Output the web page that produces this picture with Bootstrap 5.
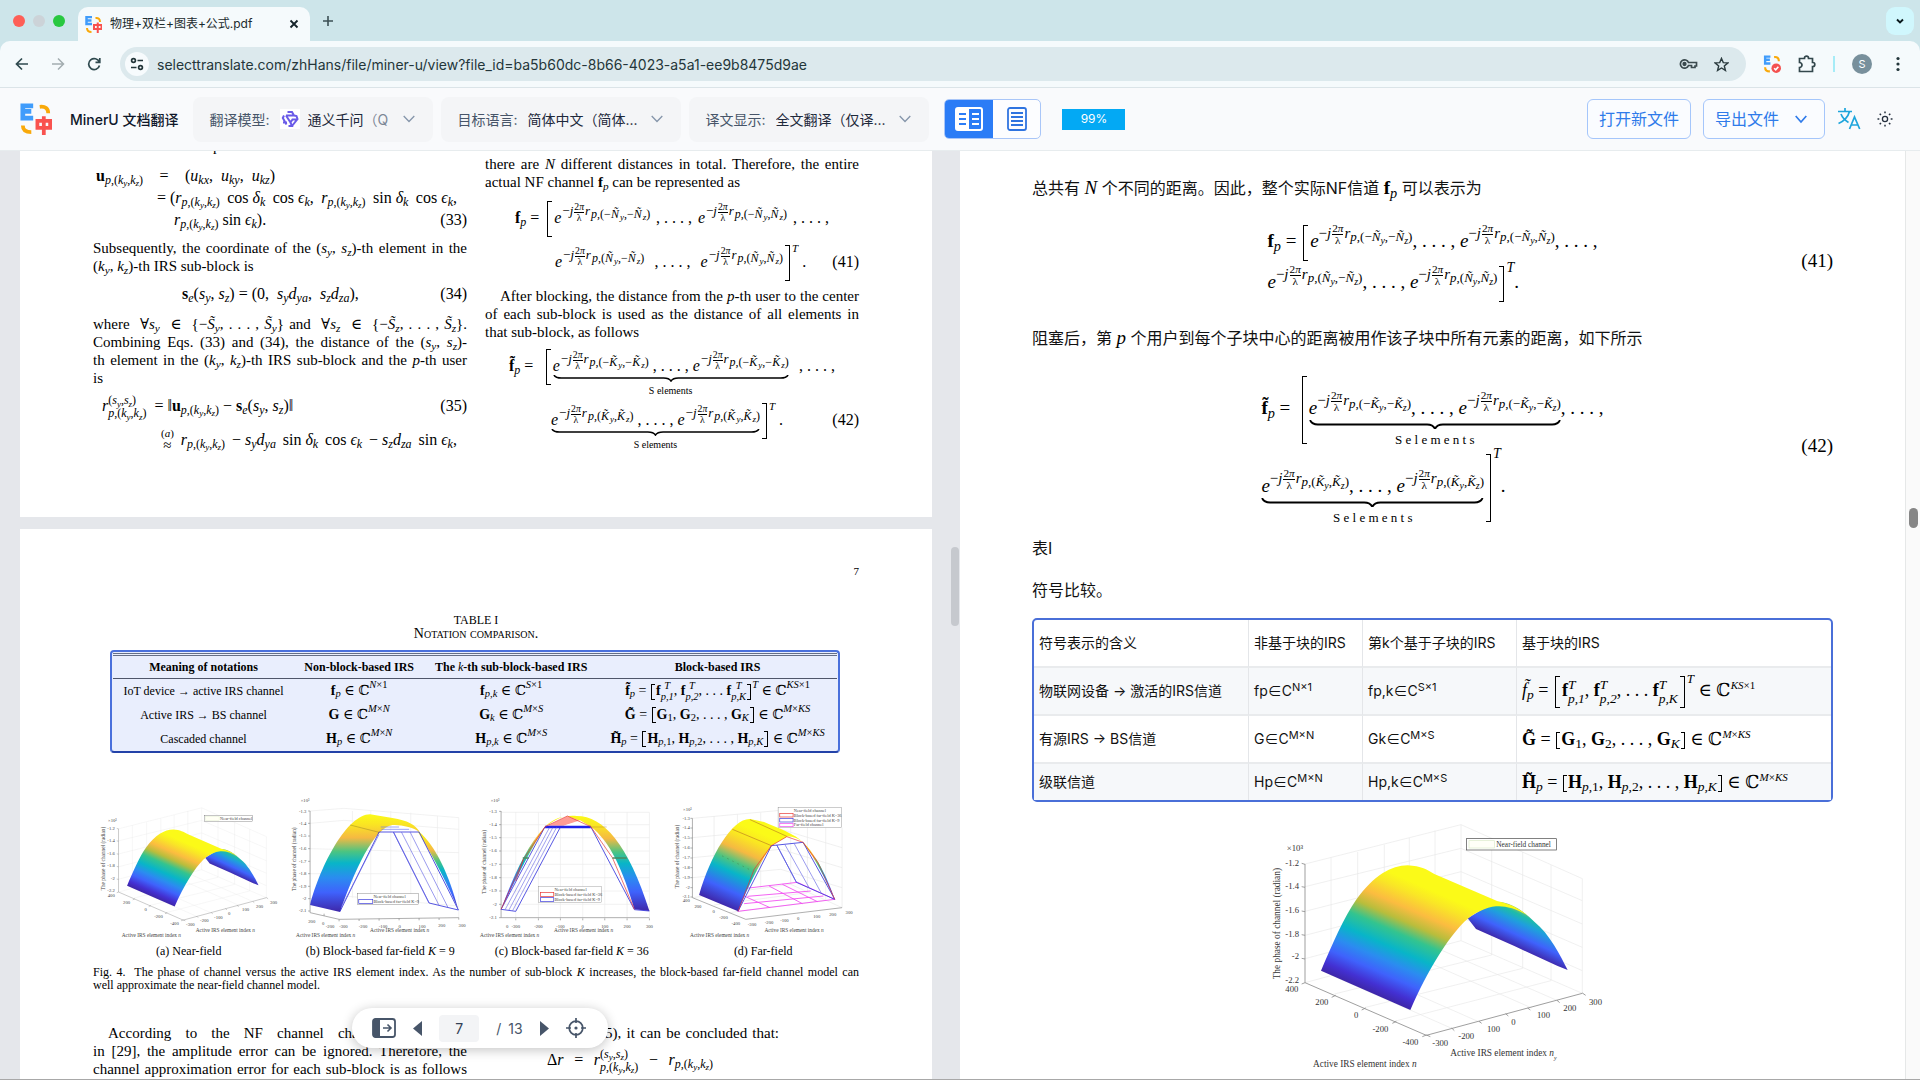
<!DOCTYPE html>
<html lang="zh-Hans">
<head>
<meta charset="utf-8">
<meta name="viewport" content="width=device-width, initial-scale=1">
<title>物理+双栏+图表+公式.pdf</title>
<link href="https://cdn.jsdelivr.net/npm/bootstrap@5.3.0/dist/css/bootstrap.min.css" rel="stylesheet">
<style>
body{font-family:Inter,"Noto Sans CJK SC",sans-serif;font-size:14px;color:#111;background:#cde5ea}
svg{display:block;flex:none}
button,input,select{font-family:inherit}
.bare{border:0;background:none;padding:0;display:flex;align-items:center;justify-content:center}
/* browser frame */
.tabs-bar{height:41px;background:#cde5ea;padding:7px 6px 0 13px}
.dots{margin-right:13px}
.dot{width:12px;height:12px;border-radius:50%;background:#ccd3d8}
.dot-close{background:#fe5f57}
.dot-zoom{background:#28c840}
.page-tab{width:232px;height:34px;background:#f5fafc;border-radius:10px 10px 0 0;font-size:12px;color:#1b2a2d;padding:0 10px 0 7px}
.tab-menu{width:28px;height:28px;border-radius:9px;background:#d0f7fd}
.address-bar{height:47px;background:#f5fafc;border-bottom:1px solid #dbe4e8;border-radius:10px 10px 0 0;padding:0 13px 0 12px}
.nav-btn{width:20px;height:20px}
.url-pill{height:34px;border-radius:17px;background:#dce9ed;padding:0 17px 0 5px}
.site-chip{width:24px;height:24px;border-radius:50%;background:#f7fbfd}
.url-input{border:0;background:transparent;outline:0;font-size:14px;color:#24363a;padding:0}
.ext-row{gap:17px;margin-left:17px}
.ext-split{width:2px;height:16px;background:#a6ecf7}
.avatar{width:20px;height:20px;border-radius:50%;background:#78909c;color:#fff;font-size:11px}
/* application header */
.app-bar{height:63px;background:#f9fafc;padding:0 27px 0 20px;border-bottom:1px solid #e7ecee}
.brand-name{font-weight:500;color:#0f172a;margin:0 15px 0 18px}
.picker{width:240px;height:45px;border-radius:8px;background:#f4f5f7;padding:0 16px;gap:10px;color:#475569}
.picker label{white-space:nowrap}
.picker select{appearance:none;border:0;background:transparent;padding:0;color:#1e293b;outline:0;font-size:14px;text-overflow:ellipsis;overflow:hidden;white-space:nowrap}
.picker-value{width:113px;overflow:hidden;white-space:nowrap}
.model-chip{width:20px;height:20px;background:#fff;flex:none}
.model-note{color:#7c8796}
.seg{height:40px;border:1px solid #a9c6f8;border-radius:5px;overflow:hidden;background:#fcfdff;margin:0 21px 0 15px}
.seg button{width:47px;height:38px}
.seg .on{background:#2b7cf6;width:48px}
.pct{width:63px;height:21px;background:#03a9f4;color:#fff;font-size:12px}
.tools{gap:12px}
.btn-line{height:40px;border:1px solid #a5c6fb;border-radius:6px;color:#2f7bea;font-size:16px;padding:0 11px;background:#fafcff;white-space:nowrap}
.btn-wide{padding-right:17px}
/* panes */
.work{min-height:0;border-bottom:1px solid #a8a8a8}
.pane{width:50%;overflow:hidden;position:relative}
.min0{min-width:0}
.source-pane{background:#e5e7eb;padding-left:20px}
.rail-left{flex:none;width:28px;padding-left:19px}
.rail-left div{width:8px;height:79px;border-radius:4px;background:#c6c9ce;margin-top:396px}
.rail-right{flex:none;width:15px;background:#fafafa;border-left:1px solid #e6e8e8;padding-left:3px}
.rail-right div{width:9px;height:20px;border-radius:5px;background:#868686;margin-top:357px}
.sheet{background:#fff;padding:0 73px;font-family:"Liberation Serif","DejaVu Serif",serif;font-size:15px;line-height:18px;color:#000}
:where(.sheet,.article) p{margin:0}
.cols{gap:18px}
.sheet-a{height:366px}
.sheet-b{height:620px;margin-top:12px;padding-top:34px}
.prev-line{margin-top:-14px;padding-left:120px}
.half{flex:1 1 0;min-width:0}
.jl{display:block;white-space:nowrap;text-align:justify;text-align-last:justify}
.ll{display:block;white-space:nowrap}
.ind{padding-left:15px}
.fig-caption{font-size:12px;line-height:13px;padding-top:7px}
/* formulas */
.eq{height:18px;display:flex;justify-content:space-between;white-space:nowrap;font-size:16px}
.mx{white-space:nowrap}
.mx sub,.mx sup,.eq sub,.eq sup,.sheet sub{font-size:.75em}
.eq sup,.mx sup{top:-.6em}
.eq .ex{font-size:13px;margin-left:1px}
.eq .ex sub{font-size:12px;margin-left:1px}
.eq .ex sub sub{font-size:9px}
.eqg .ex{font-size:15px}
.eqg .ex sub{font-size:13px}
.eqg .ex sub sub{font-size:10px}
.ss{display:inline-flex;flex-direction:column;vertical-align:middle;font-size:.75em;line-height:1;margin:-8px 0}
.eq .ss{font-size:12px;line-height:13px}
.eq .over{text-align:center;margin-top:-14px;font-size:11px}
.over span+span{font-size:15px;line-height:10px}
.fr{display:inline-flex;flex-direction:column;vertical-align:middle;font-size:.75em;line-height:1;margin:-8px 1px;text-align:center;font-style:normal}
.fr span:first-child{border-bottom:1px solid currentColor}
.lb,.rb{display:inline-block;width:5px;height:36px;margin:-12px 2px;border:1px solid #000;border-right:0;vertical-align:middle}
.rb{border-right:1px solid #000;border-left:0}
.pw{font-size:11px;position:relative;top:-15px}
.ub{display:inline-flex;flex-direction:column;margin-bottom:-40px}
.ub svg{width:0;min-width:100%;height:7px}
.ub em{font-style:normal;font-size:10px;line-height:12px;text-align:center;padding-top:3px}
.g4{margin-top:4px}.g10{margin-top:10px}.g12{margin-top:12px}.g16{margin-top:16px}.g18{margin-top:18px}.g20{margin-top:20px}.g24{margin-top:24px}.g26{margin-top:26px}.g36{margin-top:36px}
/* notation table of the source */
.folio{font-size:11px;line-height:16px}
.cap-table{font-size:12px;line-height:14px;padding-top:34px}
.cap-table span{font-variant:small-caps;font-size:14px}
.note-box{margin:9px 19px 0 17px;border:2px solid #4a70dc;border-bottom-color:#2342a8;border-radius:4px;background:#e9eefd;padding:1px 1px 0}
.note-grid{width:100%;font-size:12px;table-layout:fixed;text-align:center;border-top:3px double #666f86}
.note-grid th{height:24px;border-bottom:1px solid #4f566a;padding:0;line-height:18px;white-space:nowrap}
.note-grid td{height:24px;padding:0;line-height:18px;white-space:nowrap}
.note-grid td+td{font-size:14px}
.note-grid .rb,.note-grid .lb{height:16px;width:4px;margin:-4px 1px}
.figs{margin-top:38px;font-size:12px;line-height:16px;text-align:center}
.figs figure{margin:0;flex:1 1 0;min-width:0}
.figs svg{width:100%;height:150px;margin-bottom:2px}
.body-row{margin-top:32px}
/* pager */
.pager{position:absolute;left:352px;bottom:31px;height:40px;width:256px;border-radius:20px;background:#fff;box-shadow:0 2px 12px rgba(0,0,0,.24);color:#475569;font-size:14px;padding:0 22px 0 20px}
.pager input{width:40px;height:27px;border:0;border-radius:4px;background:#f3f4f6;text-align:center;color:#334155;padding:0}
/* translated pane */
.target-pane{background:#fff}
.article{padding:25px 72px 0;font-size:16px;line-height:24px;color:#111}
.tex{font-family:"Liberation Serif","DejaVu Serif",serif;color:#000}
.article p .tex{font-size:19px;line-height:20px}
.eqg{display:grid;grid-template-columns:1fr auto 1fr;align-items:center;font-size:19px}
.eqg .num{text-align:right;font-size:19px}
.eqg .r41{line-height:41px;height:41px}
.eqg .r42{height:78px;padding-top:20px}
.eqg .ub em{font-size:13px;line-height:16px}
.eqg .ub svg{height:9px}
.tall .lb,.tall .rb{height:68px;margin:-30px 2px}
.eqg .pw{font-size:14px;top:-16px}
.eqg.tall .pw{top:-34px}
.trans{width:100%;border:2px solid #4a6fd8;border-radius:5px;border-collapse:separate;border-spacing:0;font-size:14px;line-height:20px;table-layout:fixed}
.trans th,.trans td{font-weight:400;padding:0 5px;border-right:1px solid #e4e6e9;border-bottom:2px solid #e9ebed;height:48px;white-space:nowrap}
.trans tr:last-child td{height:36px;border-bottom:0}
.trans th:last-child,.trans td:last-child{border-right:0}
.trans tr:nth-child(even) td{background:#f6f8fa}
.trans .tex{font-size:18px}
.trans .lb,.trans .rb{height:32px;margin:-10px 2px}
.trans .low .lb,.trans .low .rb{height:17px;width:4px;margin:-4px 1px}
.trans .pw{font-size:13px;top:-13px}
.trans sup{font-size:11px}
.plot{margin:8px auto 0}
</style>
</head>
<body class="vh-100 overflow-hidden d-flex flex-column">
<svg width="0" height="0" class="position-absolute" aria-hidden="true">
<defs>
<linearGradient id="gs" gradientUnits="userSpaceOnUse" x1="240" y1="482" x2="398" y2="122"><stop offset="0" stop-color="#3e26a8"/><stop offset=".07" stop-color="#4330d2"/><stop offset=".17" stop-color="#3f62fc"/><stop offset=".27" stop-color="#2b8cf0"/><stop offset=".38" stop-color="#08b5c8"/><stop offset=".5" stop-color="#33c48f"/><stop offset=".6" stop-color="#b9bd3c"/><stop offset=".7" stop-color="#fbbc40"/><stop offset=".82" stop-color="#f9e626"/><stop offset=".9" stop-color="#fbfa18"/></linearGradient>
<linearGradient id="gu" gradientUnits="userSpaceOnUse" x1="820" y1="412" x2="872" y2="300"><stop offset="0" stop-color="#3e26a8"/><stop offset=".3" stop-color="#3f62fc"/><stop offset=".6" stop-color="#1f9fdd"/><stop offset=".78" stop-color="#1dbda8"/><stop offset="1" stop-color="#e8b93c"/></linearGradient>
<linearGradient id="gv" x1="0" y1="1" x2="0" y2="0"><stop offset="0" stop-color="#3e26a8"/><stop offset=".2" stop-color="#3f62fc"/><stop offset=".35" stop-color="#2b8cf0"/><stop offset=".5" stop-color="#08b5c8"/><stop offset=".62" stop-color="#4cc481"/><stop offset=".76" stop-color="#f5b942"/><stop offset=".9" stop-color="#fae622"/><stop offset="1" stop-color="#fbfa18"/></linearGradient>
<linearGradient id="gd" gradientUnits="userSpaceOnUse" x1="655" y1="342" x2="755" y2="118"><stop offset="0" stop-color="#3e26a8"/><stop offset=".2" stop-color="#3f62fc"/><stop offset=".42" stop-color="#08b5c8"/><stop offset=".55" stop-color="#4cc481"/><stop offset=".7" stop-color="#f5b942"/><stop offset=".87" stop-color="#fae622"/><stop offset="1" stop-color="#fbfa18"/></linearGradient>
<g id="nearfield">
<path d="M192 162 660 44 1024 206 M660 44V392L1024 550M660 392 192 518M192 230 660 115 1024 272M192 304 660 185 1024 342M192 376 660 255 1024 412M192 446 660 322 1024 482M350 126V475L715 636M430 104V455M505 84V432M582 62V412M752 84V435L280 552M845 126V475L370 593M930 165V512L460 634M505 432 872 594M582 412 950 572M1024 206V550M270 142V495L632 655" fill="none" stroke="#e8e8e8" stroke-width="2"/>
<path d="M192 162V518L556 676 1024 550M182 160 192 163M182 230 192 232M182 303 192 305M182 374 192 376M182 445 192 447M182 522 192 518M272 562 284 556M362 600 374 594M454 640 466 634M544 680 556 675 568 680M640 662 632 654M722 640 714 634M802 618 794 611M868 600 860 594M956 578 948 571M1034 556 1024 549" fill="none" stroke="#8c8c8c" stroke-width="2.5"/>
<path d="M680 325 705 357 820 408 950 468 980 480C960 440 925 370 880 335 845 300 800 272 760 276Z" fill="url(#gu)"/>
<path d="M240 482C275 400 310 320 345 270 400 195 450 167 500 166 540 168 560 180 580 192L770 274C800 280 830 292 862 318 830 296 790 286 765 289 735 292 700 308 670 335 620 385 560 480 508 600Z" fill="url(#gs)"/>
</g>
</defs></svg>

<header>
<div class="tabs-bar d-flex align-items-start">
  <div class="dots d-flex gap-2 pt-2"><span class="dot dot-close"></span><span class="dot"></span><span class="dot dot-zoom"></span></div>
  <div class="page-tab d-flex align-items-center">
    <svg width="17" height="17" viewBox="0 0 34 34"><path d="M14 2H3V16H14M3 9H13" fill="none" stroke="#409cfb" stroke-width="5"/><path d="M21 4q9-1 9 8M4 24q0 8 9 8" fill="none" stroke="#f9a90a" stroke-width="4"/><path d="M18 18H33V26H18ZM25.500 13V34" fill="none" stroke="#f9524f" stroke-width="4"/></svg>
    <span class="ms-2 flex-grow-1 text-nowrap">物理+双栏+图表+公式.pdf</span>
    <button class="bare" aria-label="关闭标签页"><svg width="12" height="12" viewBox="0 0 12 12"><path d="M2.500 2.500 9.500 9.500M9.500 2.500 2.500 9.500" stroke="#14232a" stroke-width="1.800"/></svg></button>
  </div>
  <button class="bare nav-btn mt-1 ms-2 px-1" aria-label="新标签页"><svg width="12" height="12" viewBox="0 0 12 12"><path d="M6 1V11M1 6H11" stroke="#3c5055" stroke-width="1.600"/></svg></button>
  <button class="bare tab-menu ms-auto" aria-label="搜索标签页"><svg width="10" height="10" viewBox="0 0 10 10"><path d="M2 3.500 5 6.500 8 3.500" fill="none" stroke="#0b1a1d" stroke-width="1.900"/></svg></button>
</div>
<div class="address-bar d-flex align-items-center">
  <div class="d-flex gap-3 me-3">
    <button class="bare nav-btn" aria-label="后退"><svg width="14" height="14" viewBox="0 0 14 14"><path d="M13 7H2M7 1.500 1.500 7 7 12.500" fill="none" stroke="#2f4a4f" stroke-width="1.700"/></svg></button>
    <button class="bare nav-btn" aria-label="前进"><svg width="14" height="14" viewBox="0 0 14 14"><path d="M1 7H12M7 1.500 12.500 7 7 12.500" fill="none" stroke="#a3adb0" stroke-width="1.500"/></svg></button>
    <button class="bare nav-btn" aria-label="刷新"><svg width="14" height="14" viewBox="0 0 14 14"><path d="M12.300 5A5.500 5.500 0 1 0 12.500 8.500M12.800 1V5.300H8.500" fill="none" stroke="#2f4a4f" stroke-width="1.700"/></svg></button>
  </div>
  <div class="url-pill d-flex align-items-center flex-grow-1">
    <span class="site-chip d-flex align-items-center justify-content-center me-2"><svg width="14" height="14" viewBox="0 0 14 14" fill="none" stroke="#23363a" stroke-width="1.700"><circle cx="3.500" cy="3.500" r="1.900"/><path d="M7.500 3.500H13M1 10.500H6.500"/><circle cx="10.500" cy="10.500" r="1.900"/></svg></span>
    <input class="url-input flex-grow-1" type="text" aria-label="地址" value="selecttranslate.com/zhHans/file/miner-u/view?file_id=ba5b60dc-8b66-4023-a5a1-ee9b8475d9ae">
    <div class="d-flex align-items-center gap-3">
      <svg width="19" height="14" viewBox="0 0 19 14" fill="none" stroke="#3b4a4e" stroke-width="1.700"><path d="M9.500 5.500H17.500V9H16V10.500H12.500V8.500H9.500A4.200 4.200 0 1 1 9.500 5.500Z"/><circle cx="5.500" cy="7" r="1.300" fill="#3b4a4e"/></svg>
      <svg width="15" height="15" viewBox="0 0 16 16"><path d="M8 1.500 9.900 6 14.800 6.300 11 9.500 12.200 14.300 8 11.700 3.800 14.300 5 9.500 1.200 6.300 6.100 6Z" fill="none" stroke="#2b3b3f" stroke-width="1.500"/></svg>
    </div>
  </div>
  <div class="ext-row d-flex align-items-center">
    <svg width="18" height="18" viewBox="0 0 34 34"><path d="M14 3H4V16H14M4 9H13" fill="none" stroke="#409cfb" stroke-width="4.500"/><path d="M21 4q9-1 9 8M4 23q0 8 9 8" fill="none" stroke="#f9a90a" stroke-width="4"/><circle cx="25" cy="25" r="9" fill="#f4514f"/><path d="M21 25 24 28 29 22" fill="none" stroke="#fff" stroke-width="3"/></svg>
    <svg width="18" height="18" viewBox="1 0 18 18"><path d="M2.500 3.500H7.500V3A2 1.800 0 0 1 11.500 3V3.500H15.500V7.500H16A1.800 2 0 0 1 16 11.500H15.500V16.500H2.500V12.500A2.500 2.500 0 0 0 2.500 7.500Z" fill="none" stroke="#33474c" stroke-width="1.700"/></svg>
    <span class="ext-split"></span>
    <span class="avatar d-flex align-items-center justify-content-center">S</span>
    <svg width="18" height="18" viewBox="0 0 18 18" fill="#23363a"><circle cx="9" cy="3.500" r="1.600"/><circle cx="9" cy="9" r="1.600"/><circle cx="9" cy="14.500" r="1.600"/></svg>
  </div>
</div>
<div class="app-bar d-flex align-items-center">
  <svg width="32" height="32" viewBox="0 0 34 34"><path d="M14 3H3V16H14M3 9H12" fill="none" stroke="#409cfb" stroke-width="5"/><path d="M21 4q9-1 9 7M3 24q0 7 9 7" fill="none" stroke="#f9a90a" stroke-width="4"/><path d="M18.500 19H32V26.500H18.500ZM25.300 14V34" fill="none" stroke="#f9524f" stroke-width="4"/></svg>
  <span class="brand-name text-nowrap">MinerU 文档翻译</span>
  <div class="d-flex gap-2">
    <div class="picker d-flex align-items-center"><label for="model">翻译模型:</label>
      <div class="picker-value d-flex align-items-center"><span class="model-chip me-2"><svg width="20" height="20" viewBox="0 0 20 20" fill="none" stroke="#6a5be8" stroke-width="2"><path d="M7.500 3H12L14 6.500H6M4 6.500 2.800 9 6.500 15.500M6 6.500 10.500 13.500 12 17H8.500M14 6.500 16.500 7 17.500 10 12 17M17 10.500H12.500L10.500 13.500M3 13.500H7"/></svg></span><select id="model"><option>通义千问</option></select><span class="model-note">（Q</span></div>
      <svg width="12" height="8" viewBox="0 0 12 8"><path d="M.7 1 6 6.500 11.300 1" fill="none" stroke="#8595aa" stroke-width="1.300"/></svg></div>
    <div class="picker d-flex align-items-center"><label for="lang">目标语言:</label><select id="lang" class="picker-value"><option>简体中文（简体...</option></select>
      <svg width="12" height="8" viewBox="0 0 12 8"><path d="M.7 1 6 6.500 11.300 1" fill="none" stroke="#8595aa" stroke-width="1.300"/></svg></div>
    <div class="picker d-flex align-items-center"><label for="shown">译文显示:</label><select id="shown" class="picker-value"><option>全文翻译（仅译...</option></select>
      <svg width="12" height="8" viewBox="0 0 12 8"><path d="M.7 1 6 6.500 11.300 1" fill="none" stroke="#8595aa" stroke-width="1.300"/></svg></div>
  </div>
  <div class="seg d-flex">
    <button class="bare on" aria-label="双栏"><svg width="28" height="24" viewBox="0 0 28 24"><rect x="1" y="1" width="26" height="22" rx="2" fill="#2b7cf6" stroke="#fff" stroke-width="2"/><path d="M1 1H14V23H1Z" fill="#fff"/><path d="M4 7H11M4 12H11M4 17H11" stroke="#2b7cf6" stroke-width="2"/><path d="M17 7H24M17 12H24M17 17H24" stroke="#fff" stroke-width="2"/></svg></button>
    <button class="bare" aria-label="单栏"><svg width="20" height="24" viewBox="0 0 20 24" fill="none" stroke="#2f74e0" stroke-width="1.800"><rect x="1" y="1" width="18" height="22" rx="2"/><path d="M4 6H16M4 10H16M4 14H16M4 18H16"/></svg></button>
  </div>
  <span class="pct d-flex align-items-center justify-content-center">99%</span>
  <div class="tools d-flex align-items-center ms-auto">
    <button class="btn-line">打开新文件</button>
    <button class="btn-line btn-wide d-flex align-items-center">导出文件<svg class="ms-3" width="12" height="9" viewBox="0 0 12 9"><path d="M.7 1 6 7 11.300 1" fill="none" stroke="#2f7bea" stroke-width="1.700"/></svg></button>
    <button class="bare" aria-label="语言"><svg width="24" height="22" viewBox="0 0 24 22" fill="none" stroke="#1ea5dc" stroke-width="1.700"><path d="M1 3.500H15M8 0V3.500M12.500 3.500C11 9 6 13.500 1.500 15.500M4 6C5.500 10 9 13 11.500 14.500"/><path d="M12.500 21 17.500 9 22.700 21M14.200 17H21"/></svg></button>
    <button class="bare ms-1" aria-label="主题"><svg width="16" height="16" viewBox="0 0 16 16" fill="none" stroke="#26303f" stroke-width="1.300"><circle cx="8" cy="8" r="2.600"/><path stroke-width="1.500" d="M8 .5V2.300M8 13.700V15.500M.5 8H2.300M13.700 8H15.500M2.700 2.700 4 4M12 12 13.300 13.300M2.700 13.300 4 12M12 4 13.300 2.700"/></svg></button>
  </div>
</div>
</header>

<main class="work d-flex flex-grow-1">
<section class="pane source-pane d-flex">
<div class="flex-grow-1 min0">
 <div class="sheet sheet-a cols d-flex">
  <div class="half">
   <p class="prev-line">p</p>
   <div class="eq g12" style="padding:0 192px 0 3px"><span><b>u</b><sub><i>p</i>,(<i>k<sub>y</sub></i>,<i>k<sub>z</sub></i>)</sub></span><span>=</span><span>(<i>u<sub>kx</sub></i>,&ensp;<i>u<sub>ky</sub></i>,&ensp;<i>u<sub>kz</sub></i>)</span></div>
   <div class="eq g4" style="padding:0 10px 0 64px"><span>= (<i>r</i><sub><i>p</i>,(<i>k<sub>y</sub></i>,<i>k<sub>z</sub></i>)</sub></span><span>cos <i>δ<sub>k</sub></i></span><span>cos <i>ϵ<sub>k</sub></i>,</span><span><i>r</i><sub><i>p</i>,(<i>k<sub>y</sub></i>,<i>k<sub>z</sub></i>)</sub></span><span>sin <i>δ<sub>k</sub></i></span><span>cos <i>ϵ<sub>k</sub></i>,</span></div>
   <div class="eq g4" style="padding-left:81px"><span><i>r</i><sub><i>p</i>,(<i>k<sub>y</sub></i>,<i>k<sub>z</sub></i>)</sub> sin <i>ϵ<sub>k</sub></i>).</span><span>(33)</span></div>
   <p class="g10"><span class="jl">Subsequently, the coordinate of the (<i>s<sub>y</sub></i>, <i>s<sub>z</sub></i>)-th element in the</span><span class="ll">(<i>k<sub>y</sub></i>, <i>k<sub>z</sub></i>)-th IRS sub-block is</span></p>
   <div class="eq g10" style="padding-left:89px"><span><b>s</b><sub><i>e</i></sub>(<i>s<sub>y</sub></i>, <i>s<sub>z</sub></i>) = (0,&ensp;<i>s<sub>y</sub>d<sub>ya</sub></i>,&ensp;<i>s<sub>z</sub>d<sub>za</sub></i>),</span><span>(34)</span></div>
   <p class="g12"><span class="jl">where&nbsp; ∀<i>s<sub>y</sub></i>&nbsp; ∈&nbsp; {−<i>S̃<sub>y</sub></i>, . . . , <i>S̃<sub>y</sub></i>} and&nbsp; ∀<i>s<sub>z</sub></i>&nbsp; ∈&nbsp; {−<i>S̃<sub>z</sub></i>, . . . , <i>S̃<sub>z</sub></i>}.</span><span class="jl">Combining Eqs. (33) and (34), the distance of the (<i>s<sub>y</sub></i>, <i>s<sub>z</sub></i>)-</span><span class="jl">th element in the (<i>k<sub>y</sub></i>, <i>k<sub>z</sub></i>)-th IRS sub-block and the <i>p</i>-th user</span><span class="ll">is</span></p>
   <div class="eq g10" style="padding-left:9px"><span><i>r</i><span class="ss"><span>(<i>s<sub>y</sub></i>,<i>s<sub>z</sub></i>)</span><span><i>p</i>,(<i>k<sub>y</sub></i>,<i>k<sub>z</sub></i>)</span></span>&nbsp; = ‖<b>u</b><sub><i>p</i>,(<i>k<sub>y</sub></i>,<i>k<sub>z</sub></i>)</sub> − <b>s</b><sub><i>e</i></sub>(<i>s<sub>y</sub></i>, <i>s<sub>z</sub></i>)‖</span><span>(35)</span></div>
   <div class="eq g16" style="padding:0 10px 0 68px"><span><span class="ss over"><span>(<i>a</i>)</span><span>≈</span></span></span><span><i>r</i><sub><i>p</i>,(<i>k<sub>y</sub></i>,<i>k<sub>z</sub></i>)</sub></span><span>− <i>s<sub>y</sub>d<sub>ya</sub></i></span><span>sin <i>δ<sub>k</sub></i></span><span>cos <i>ϵ<sub>k</sub></i></span><span>− <i>s<sub>z</sub>d<sub>za</sub></i></span><span>sin <i>ϵ<sub>k</sub></i>,</span></div>
  </div>
  <div class="half g4">
   <p><span class="jl">there are <i>N</i> different distances in total. Therefore, the entire</span><span class="ll">actual NF channel <b>f</b><sub><i>p</i></sub> can be represented as</span></p>
   <div class="eq g18" style="padding:0 30px"><span><b>f</b><sub><i>p</i></sub> =</span><span><span class="lb"></span><i>e</i><sup class="ex">−<i>j</i><span class="fr"><span>2<i>π</i></span><span>λ</span></span><i>r</i><sub><i>p</i>,(−<i>Ñ<sub>y</sub></i>,−<i>Ñ<sub>z</sub></i>)</sub></sup></span><span>, . . . ,</span><span><i>e</i><sup class="ex">−<i>j</i><span class="fr"><span>2<i>π</i></span><span>λ</span></span><i>r</i><sub><i>p</i>,(−<i>Ñ<sub>y</sub></i>,<i>Ñ<sub>z</sub></i>)</sub></sup></span><span>, . . . ,</span></div>
   <div class="eq g26" style="padding-left:70px"><span><i>e</i><sup class="ex">−<i>j</i><span class="fr"><span>2<i>π</i></span><span>λ</span></span><i>r</i><sub><i>p</i>,(<i>Ñ<sub>y</sub></i>,−<i>Ñ<sub>z</sub></i>)</sub></sup></span><span>, . . . ,</span><span><i>e</i><sup class="ex">−<i>j</i><span class="fr"><span>2<i>π</i></span><span>λ</span></span><i>r</i><sub><i>p</i>,(<i>Ñ<sub>y</sub></i>,<i>Ñ<sub>z</sub></i>)</sub></sup><span class="rb"></span><i class="pw">T</i> .</span><span class="ps-3">(41)</span></div>
   <p class="g16"><span class="jl ind">After blocking, the distance from the <i>p</i>-th user to the center</span><span class="jl">of each sub-block is used as the distance of all elements in</span><span class="ll">that sub-block, as follows</span></p>
   <div class="eq g16" style="padding:0 24px"><span><b>f̃</b><sub><i>p</i></sub> =</span><span><span class="lb"></span><span class="ub"><span><i>e</i><sup class="ex">−<i>j</i><span class="fr"><span>2<i>π</i></span><span>λ</span></span><i>r</i><sub><i>p</i>,(−<i>K̃<sub>y</sub></i>,−<i>K̃<sub>z</sub></i>)</sub></sup> , . . . , <i>e</i><sup class="ex">−<i>j</i><span class="fr"><span>2<i>π</i></span><span>λ</span></span><i>r</i><sub><i>p</i>,(−<i>K̃<sub>y</sub></i>,−<i>K̃<sub>z</sub></i>)</sub></sup></span><svg viewBox="0 0 256 7" preserveAspectRatio="none"><path d="M1 0Q3 3 9 3H120Q126 3 128 6 130 3 136 3H247Q253 3 255 0" fill="none" stroke="#000" stroke-width="1.600"/></svg><em>S elements</em></span></span><span>, . . . ,</span></div>
   <div class="eq g36" style="padding-left:66px"><span><span class="ub"><span><i>e</i><sup class="ex">−<i>j</i><span class="fr"><span>2<i>π</i></span><span>λ</span></span><i>r</i><sub><i>p</i>,(<i>K̃<sub>y</sub></i>,<i>K̃<sub>z</sub></i>)</sub></sup> , . . . , <i>e</i><sup class="ex">−<i>j</i><span class="fr"><span>2<i>π</i></span><span>λ</span></span><i>r</i><sub><i>p</i>,(<i>K̃<sub>y</sub></i>,<i>K̃<sub>z</sub></i>)</sub></sup></span><svg viewBox="0 0 220 7" preserveAspectRatio="none"><path d="M1 0Q3 3 9 3H102Q108 3 110 6 112 3 118 3H211Q217 3 219 0" fill="none" stroke="#000" stroke-width="1.600"/></svg><em>S elements</em></span><span class="rb"></span><i class="pw">T</i> .</span><span>(42)</span></div>
  </div>
 </div>
 <div class="sheet sheet-b">
  <div class="folio text-end">7</div>
  <div class="cap-table text-center">TABLE I<br><span>Notation comparison.</span></div>
  <div class="note-box"><table class="note-grid"><colgroup><col style="width:25%"><col style="width:18%"><col style="width:24%"><col></colgroup>
   <tr><th>Meaning of notations</th><th>Non-block-based IRS</th><th>The <i class="fw-normal">k</i>-th sub-block-based IRS</th><th>Block-based IRS</th></tr>
   <tr class="mx"><td>IoT device → active IRS channel</td><td><b>f</b><sub><i>p</i></sub> ∈ ℂ<sup><i>N</i>×1</sup></td><td><b>f</b><sub><i>p,k</i></sub> ∈ ℂ<sup><i>S</i>×1</sup></td><td><b>f̃</b><sub><i>p</i></sub> = <span class="lb"></span><b>f</b><span class="ss"><i>T</i><i>p,1</i></span>, <b>f</b><span class="ss"><i>T</i><i>p,2</i></span>, . . . <b>f</b><span class="ss"><i>T</i><i>p,K</i></span><span class="rb"></span><sup><i>T</i></sup> ∈ ℂ<sup><i>KS</i>×1</sup></td></tr>
   <tr class="mx"><td>Active IRS → BS channel</td><td><b>G</b> ∈ ℂ<sup><i>M</i>×<i>N</i></sup></td><td><b>G</b><sub><i>k</i></sub> ∈ ℂ<sup><i>M</i>×<i>S</i></sup></td><td><b>G̃</b> = <span class="lb"></span><b>G</b><sub>1</sub>, <b>G</b><sub>2</sub>, . . . , <b>G</b><sub><i>K</i></sub><span class="rb"></span> ∈ ℂ<sup><i>M</i>×<i>KS</i></sup></td></tr>
   <tr class="mx"><td>Cascaded channel</td><td><b>H</b><sub><i>p</i></sub> ∈ ℂ<sup><i>M</i>×<i>N</i></sup></td><td><b>H</b><sub><i>p,k</i></sub> ∈ ℂ<sup><i>M</i>×<i>S</i></sup></td><td><b>H̃</b><sub><i>p</i></sub> = <span class="lb"></span><b>H</b><sub><i>p</i>,1</sub>, <b>H</b><sub><i>p</i>,2</sub>, . . . , <b>H</b><sub><i>p,K</i></sub><span class="rb"></span> ∈ ℂ<sup><i>M</i>×<i>KS</i></sup></td></tr>
  </table></div>
  <div class="figs d-flex">
   <figure><svg viewBox="9 30 574 450" font-size="14" fill="#444"><use href="#nearfield" transform="translate(-17 57) scale(.533)"/>
    <rect x="343" y="103" width="145" height="19" fill="#fff" stroke="#555"/><rect x="347" y="106" width="40" height="13" fill="#fffff4" stroke="#dcebc8"/><text x="390" y="116" font-size="13">Near-field channel</text>
    <g text-anchor="end"><text x="80" y="122">×10³</text><text x="74" y="147">-1.2</text><text x="74" y="184">-1.4</text><text x="74" y="221">-1.6</text><text x="74" y="258">-1.8</text><text x="74" y="296">-2</text><text x="74" y="332">-2.2</text><text x="74" y="347">400</text><text x="120" y="369">200</text><text x="170" y="391">0</text><text x="218" y="412">-200</text><text x="266" y="433">-400</text></g>
    <text x="288" y="436">-300</text><text x="330" y="424">-200</text><text x="372" y="413">-100</text><text x="414" y="402">0</text><text x="456" y="391">100</text><text x="498" y="381">200</text><text x="540" y="370">300</text>
    <g font-size="16"><text x="95" y="469">Active IRS element index <tspan font-style="italic">n</tspan></text><text x="317" y="453">Active IRS element index <tspan font-style="italic">n</tspan></text><text transform="translate(44 328) rotate(-90)">The phase of channel (radian)</text></g></svg>(a) Near-field</figure>
   <figure><svg viewBox="583 30 574 450" font-size="14" fill="#444">
    <path d="M658 90 760 82 1104 110M658 127 760 118 1104 145M658 203 1104 215M658 278H1104M658 353 760 345 1104 375M785 90V350M840 90V350M900 90V350M960 95V360M1040 105V372M1104 110V410" fill="none" stroke="#ececec" stroke-width="2"/>
    <path d="M658 90V395L745 415 1104 410M652 90H658M652 127H658M652 165H658M652 203H658M652 241H658M652 278H658M652 316H658M652 353H658M652 390H658M700 405V398M745 421V415M805 420V414M865 419V413M925 418V412M985 418V411M1045 417V411M1104 416V410" fill="none" stroke="#888" stroke-width="2"/>
    <path d="M985 152C1035 195 1075 280 1103 387 1075 320 1030 230 980 150Z" fill="url(#gv)"/>
    <path d="M658 372C690 250 770 100 838 100L905 111C950 118 975 132 987 153 970 140 930 130 905 132 850 140 790 270 748 393Z" fill="url(#gv)"/>
    <path d="M778 132 865 154" stroke="#6b5a20"/><path d="M870 138H925M872 145H955" stroke="#7078e8" stroke-width="2"/>
    <path d="M748 391 865 153H985L1103 387 1015 366 908 153" fill="none" stroke="#3434dc" stroke-width="2.500"/><path d="M908 153 1015 366M932 153 1045 373M958 153 1072 380M752 378 865 160" fill="none" stroke="#6a6ae6" stroke-width="2"/>
    <rect x="800" y="338" width="183" height="32" fill="#fff" stroke="#555"/><rect x="804" y="355" width="42" height="12" fill="#fff" stroke="#3434dc" stroke-width="2"/><g font-size="13"><text x="848" y="351">Near-field channel</text><text x="848" y="366">Block-based far-field K=9</text></g>
    <g text-anchor="end"><text x="656" y="64">×10³</text><text x="647" y="95">-1.3</text><text x="647" y="131">-1.4</text><text x="647" y="169">-1.5</text><text x="647" y="207">-1.6</text><text x="647" y="245">-1.7</text><text x="647" y="282">-1.8</text><text x="647" y="320">-1.9</text><text x="647" y="357">-2</text><text x="647" y="394">-2.1</text></g>
    <g text-anchor="middle"><text x="663" y="425">200</text><text x="697" y="431">0</text><text x="718" y="440">-200</text><text x="758" y="442">-300</text><text x="817" y="442">-200</text><text x="877" y="441">-100</text><text x="927" y="440">0</text><text x="994" y="440">100</text><text x="1053" y="438">200</text><text x="1114" y="437">300</text></g>
    <g font-size="16"><text x="616" y="469">Active IRS element index <tspan font-style="italic">n</tspan></text><text x="838" y="454">Active IRS element index <tspan font-style="italic">n</tspan></text><text transform="translate(615 330) rotate(-90)">The phase of channel (radian)</text></g></svg>(b) Block-based far-field <i>K</i> = 9</figure>
   <figure><svg viewBox="-12 30 574 450" font-size="14" fill="#444">
    <path d="M63 94H508M63 131H508M63 170H508M63 210H508M63 250H508M63 290H508M63 330H508M63 370H508M107 94V410M175 94V410M241 94V410M308 94V410M374 94V410M441 94V410M508 94V410" fill="none" stroke="#ececec" stroke-width="2"/>
    <path d="M63 90V410H508M57 91H63M57 131H63M57 170H63M57 210H63M57 250H63M57 290H63M57 330H63M57 370H63M57 410H63M107 418V412M175 418V412M241 418V412M308 418V412M374 418V412M441 418V412M508 418V412" fill="none" stroke="#888" stroke-width="2"/>
    <path d="M195 137C225 108 260 102 290 105 370 105 445 190 508 390L463 385C430 270 390 180 332 137 300 118 270 108 262 105 235 108 215 125 195 137ZM63 385C95 300 135 200 195 137 140 225 100 310 63 385Z" fill="url(#gv)"/>
    <path d="M203 134 262 106 302 120 250 134Z" fill="#ff9c94"/><path d="M250 134 300 118 332 137Z" fill="#fff"/>
    <path d="M195 138H332" stroke="#2222e8" stroke-width="7"/><path d="M63 385 195 137M332 137 463 386 508 390M63 385 107 391 240 140" fill="none" stroke="#3434dc" stroke-width="2.500"/><path d="M75 386 208 140M86 388 218 140M97 390 229 140" stroke="#7272e6" stroke-width="2"/>
    <path d="M63 385 130 235 195 137 262 105 332 137 397 230 463 385M130 235 107 300" fill="none" stroke="#e8302c" stroke-width="2"/><path d="M128 231H146M397 231H440" stroke="#4a8a60" stroke-width="4"/><path d="M332 138H380" stroke="#a07020"/>
    <rect x="176" y="316" width="189" height="48" fill="#fff" stroke="#777"/><rect x="181" y="334" width="40" height="12" fill="#fff" stroke="#e8302c" stroke-width="2"/><rect x="181" y="350" width="40" height="11" fill="#fff" stroke="#3434dc" stroke-width="2"/><g font-size="13"><text x="223" y="331">Near-field channel</text><text x="223" y="346">Block-based far-field K=36</text><text x="223" y="360">Block-based far-field K=9</text></g>
    <g text-anchor="end"><text x="58" y="64">×10³</text><text x="50" y="95">-1.3</text><text x="50" y="135">-1.4</text><text x="50" y="174">-1.5</text><text x="50" y="214">-1.6</text><text x="50" y="254">-1.7</text><text x="50" y="294">-1.8</text><text x="50" y="334">-1.9</text><text x="50" y="374">-2</text><text x="50" y="413">-2.1</text></g>
    <g text-anchor="middle"><text x="81" y="440">0</text><text x="107" y="442">-300</text><text x="175" y="442">-200</text><text x="241" y="442">-100</text><text x="308" y="442">0</text><text x="374" y="442">100</text><text x="441" y="442">200</text><text x="508" y="442">300</text></g>
    <g font-size="16"><text x="0" y="469">Active IRS element index <tspan font-style="italic">n</tspan></text><text x="222" y="454">Active IRS element index <tspan font-style="italic">n</tspan></text><text transform="translate(18 338) rotate(-90)">The phase of channel (radian)</text></g></svg>(c) Block-based far-field <i>K</i> = 36</figure>
   <figure><svg viewBox="562 30 574 450" font-size="14" fill="#444">
    <path d="M635 112 900 88 1084 140M635 170 900 145 1084 200M635 230 900 205 1084 260M635 290 900 265 1084 320M635 350 930 310 1084 380M700 105V340M770 100V330M840 95V320M930 90V310M980 110V335M1035 125V358M1084 140V380M700 372 980 335M745 395 1035 358" fill="none" stroke="#e8e8e8" stroke-width="2"/>
    <path d="M635 112V350L795 415 1084 380M629 112H635M629 141H635M629 171H635M629 201H635M629 231H635M629 260H635M629 290H635M629 320H635M629 348H635" fill="none" stroke="#888" stroke-width="2"/>
    <path d="M795 322 950 304 1062 355 772 391M795 322 772 391M800 346 990 330M790 368 1028 345M865 315 965 368M905 310 1010 362M790 345 868 380" fill="none" stroke="#f045f0" stroke-width="2.500"/>
    <path d="M655 342C690 220 755 112 808 114L850 123C890 140 945 160 967 184 950 170 930 166 918 167L872 194C840 240 800 320 772 391Z" fill="url(#gd)"/>
    <path d="M967 184C1005 220 1040 290 1062 355 1035 300 1010 240 965 184Z" fill="url(#gv)"/>
    <path d="M755 145 872 194M808 116 918 166" stroke="#a85a20" stroke-width="1.500"/><path d="M725 225 805 265" stroke="#4a8a60" stroke-width="3" stroke-dasharray="3 14"/>
    <path d="M772 391 872 194 967 184 1062 355 947 304 888 192" fill="none" stroke="#3434dc" stroke-width="2.500"/><path d="M772 391 820 265 872 194 918 167 967 184 1012 245 1062 355" fill="none" stroke="#e8302c" stroke-width="2"/><path d="M912 190 985 320M940 187 1022 337M888 192 947 304" stroke="#6a6ae6" stroke-width="2"/>
    <rect x="892" y="80" width="190" height="60" fill="#fff" stroke="#666"/><g fill="#fff" stroke-width="2"><rect x="897" y="97" width="40" height="11" stroke="#e8302c"/><rect x="897" y="112" width="40" height="11" stroke="#3434dc"/><rect x="897" y="127" width="40" height="10" stroke="#f045f0"/></g><g font-size="13"><text x="939" y="94">Near-field channel</text><text x="939" y="108">Block-based far-field K=36</text><text x="939" y="122">Block-based far-field K=9</text><text x="939" y="136">Far-field channel</text></g>
    <g text-anchor="end"><text x="633" y="90">×10³</text><text x="627" y="116">-1.3</text><text x="627" y="145">-1.4</text><text x="627" y="175">-1.5</text><text x="627" y="205">-1.6</text><text x="627" y="235">-1.7</text><text x="627" y="264">-1.8</text><text x="627" y="294">-1.9</text><text x="627" y="324">-2</text><text x="627" y="351">-2.1</text><text x="627" y="364">400</text><text x="662" y="381">200</text><text x="702" y="397">0</text><text x="741" y="415">-200</text><text x="778" y="431">-400</text></g>
    <g text-anchor="middle"><text x="814" y="434">-300</text><text x="865" y="430">-200</text><text x="911" y="423">-100</text><text x="952" y="417">0</text><text x="1008" y="411">100</text><text x="1056" y="405">200</text><text x="1105" y="399">300</text></g>
    <g font-size="16"><text x="628" y="469">Active IRS element index <tspan font-style="italic">n</tspan></text><text x="851" y="453">Active IRS element index <tspan font-style="italic">n</tspan></text><text transform="translate(596 322) rotate(-90)">The phase of channel (radian)</text></g></svg>(d) Far-field</figure>
  </div>
  <p class="fig-caption"><span class="jl">Fig. 4.&nbsp; The phase of channel versus the active IRS element index. As the number of sub-block <i>K</i> increases, the block-based far-field channel model can</span><span class="ll">well approximate the near-field channel model.</span></p>
  <div class="body-row cols d-flex">
   <p class="half"><span class="jl ind">According to the NF channel characteristics from</span><span class="jl">in [29], the amplitude error can be ignored. Therefore, the</span><span class="jl">channel approximation error for each sub-block is as follows</span></p>
   <div class="half"><p class="jl" style="padding:0 80px 0 82px">Eq. (35), it can be concluded that:</p>
    <div class="eq" style="margin-top:9px;padding:0 146px 0 62px"><span>Δ<i>r</i></span><span>=</span><span><i>r</i><span class="ss"><span>(<i>s<sub>y</sub></i>,<i>s<sub>z</sub></i>)</span><span><i>p</i>,(<i>k<sub>y</sub></i>,<i>k<sub>z</sub></i>)</span></span></span><span>−</span><span><i>r</i><sub><i>p</i>,(<i>k<sub>y</sub></i>,<i>k<sub>z</sub></i>)</sub></span></div></div>
  </div>
 </div>
</div>
<div class="rail-left"><div></div></div>
<div class="pager d-flex align-items-center justify-content-between">
  <button class="bare" aria-label="侧栏"><svg width="24" height="20" viewBox="0 0 24 20"><rect x="1" y="1" width="22" height="18" rx="2.500" fill="#fff" stroke="#475569" stroke-width="1.800"/><path d="M1 2.500Q1 1 2.500 1H8V19H2.500Q1 19 1 17.500Z" fill="#475569"/><path d="M11 10H19M15.500 6.500 19 10 15.500 13.500" fill="none" stroke="#475569" stroke-width="1.600"/></svg></button>
  <button class="bare" aria-label="上一页"><svg width="9" height="15" viewBox="0 0 9 15"><path d="M9 0V15L0 7.500Z" fill="#475569"/></svg></button>
  <input type="text" value="7" aria-label="页码">
  <span class="text-nowrap">/&ensp;13</span>
  <button class="bare" aria-label="下一页"><svg width="9" height="15" viewBox="0 0 9 15"><path d="M0 0V15L9 7.500Z" fill="#475569"/></svg></button>
  <button class="bare" aria-label="定位"><svg width="20" height="20" viewBox="0 0 20 20" fill="none" stroke="#475569" stroke-width="1.700"><circle cx="10" cy="10" r="6.800"/><path d="M10 0V5M10 15V20M0 10H5M15 10H20"/><circle cx="10" cy="10" r="1.600" fill="#475569" stroke="none"/></svg></button>
</div>
</section>

<section class="pane target-pane d-flex">
<article class="article flex-grow-1 min0">
 <p>总共有 <i class="tex">N</i> 个不同的距离。因此，整个实际NF信道 <span class="tex mx"><b>f</b><sub><i>p</i></sub></span> 可以表示为</p>
 <div class="eqg tex mx g20"><span></span><div>
  <div class="r41"><b>f</b><sub><i>p</i></sub> = <span class="lb"></span><i>e</i><sup class="ex">−<i>j</i><span class="fr"><span>2<i>π</i></span><span>λ</span></span><i>r</i><sub><i>p</i>,(−<i>Ñ<sub>y</sub></i>,−<i>Ñ<sub>z</sub></i>)</sub></sup>, . . . , <i>e</i><sup class="ex">−<i>j</i><span class="fr"><span>2<i>π</i></span><span>λ</span></span><i>r</i><sub><i>p</i>,(−<i>Ñ<sub>y</sub></i>,<i>Ñ<sub>z</sub></i>)</sub></sup>, . . . ,</div>
  <div class="r41"><i>e</i><sup class="ex">−<i>j</i><span class="fr"><span>2<i>π</i></span><span>λ</span></span><i>r</i><sub><i>p</i>,(<i>Ñ<sub>y</sub></i>,−<i>Ñ<sub>z</sub></i>)</sub></sup>, . . . , <i>e</i><sup class="ex">−<i>j</i><span class="fr"><span>2<i>π</i></span><span>λ</span></span><i>r</i><sub><i>p</i>,(<i>Ñ<sub>y</sub></i>,<i>Ñ<sub>z</sub></i>)</sub></sup><span class="rb"></span><i class="pw">T</i>.</div></div>
  <span class="num">(41)</span></div>
 <p class="g24">阻塞后，第 <i class="tex">p</i> 个用户到每个子块中心的距离被用作该子块中所有元素的距离，如下所示</p>
 <div class="eqg tex mx tall g26"><span></span><div>
  <div class="r42"><b>f̃</b><sub><i>p</i></sub> = &nbsp;<span class="lb"></span><span class="ub"><span><i>e</i><sup class="ex">−<i>j</i><span class="fr"><span>2<i>π</i></span><span>λ</span></span><i>r</i><sub><i>p</i>,(−<i>K̃<sub>y</sub></i>,−<i>K̃<sub>z</sub></i>)</sub></sup>, . . . , <i>e</i><sup class="ex">−<i>j</i><span class="fr"><span>2<i>π</i></span><span>λ</span></span><i>r</i><sub><i>p</i>,(−<i>K̃<sub>y</sub></i>,−<i>K̃<sub>z</sub></i>)</sub></sup></span><svg viewBox="0 0 256 8" preserveAspectRatio="none"><path d="M1 0Q3 4 9 4H120Q126 4 128 8 130 4 136 4H247Q253 4 255 0" fill="none" stroke="#000" stroke-width="1.800"/></svg><em>S e l e m e n t s</em></span>, . . . ,</div>
  <div class="r42"><span class="ub"><span><i>e</i><sup class="ex">−<i>j</i><span class="fr"><span>2<i>π</i></span><span>λ</span></span><i>r</i><sub><i>p</i>,(<i>K̃<sub>y</sub></i>,<i>K̃<sub>z</sub></i>)</sub></sup>, . . . , <i>e</i><sup class="ex">−<i>j</i><span class="fr"><span>2<i>π</i></span><span>λ</span></span><i>r</i><sub><i>p</i>,(<i>K̃<sub>y</sub></i>,<i>K̃<sub>z</sub></i>)</sub></sup></span><svg viewBox="0 0 220 8" preserveAspectRatio="none"><path d="M1 0Q3 4 9 4H102Q108 4 110 8 112 4 118 4H211Q217 4 219 0" fill="none" stroke="#000" stroke-width="1.800"/></svg><em>S e l e m e n t s</em></span><span class="rb"></span><i class="pw">T</i>.</div></div>
  <span class="num pb-3">(42)</span></div>
 <p class="g4">表I</p>
 <p class="g18">符号比较。</p>
 <table class="trans g16"><colgroup><col style="width:215px"><col style="width:114px"><col style="width:154px"><col></colgroup>
  <tr><th>符号表示的含义</th><th>非基于块的IRS</th><th>第k个基于子块的IRS</th><th>基于块的IRS</th></tr>
  <tr><td>物联网设备 → 激活的IRS信道</td><td>fp∈C<sup>N×1</sup></td><td>fp,k∈C<sup>S×1</sup></td><td><span class="tex mx"><i>f̃<sub>p</sub></i> = <span class="lb"></span><b>f</b><span class="ss"><i>T</i><i>p,1</i></span>, <b>f</b><span class="ss"><i>T</i><i>p,2</i></span>, . . . <b>f</b><span class="ss"><i>T</i><i>p,K</i></span><span class="rb"></span><i class="pw">T</i> ∈ ℂ<sup><i>KS</i>×1</sup></span></td></tr>
  <tr><td>有源IRS → BS信道</td><td>G∈C<sup>M×N</sup></td><td>Gk∈C<sup>M×S</sup></td><td><span class="tex mx low"><b>G̃</b> = <span class="lb"></span><b>G</b><sub>1</sub>, <b>G</b><sub>2</sub>, . . . , <b>G</b><sub><i>K</i></sub><span class="rb"></span> ∈ ℂ<sup><i>M</i>×<i>KS</i></sup></span></td></tr>
  <tr><td>级联信道</td><td>Hp∈C<sup>M×N</sup></td><td>Hp,k∈C<sup>M×S</sup></td><td><span class="tex mx low"><b>H̃</b><sub><i>p</i></sub> = <span class="lb"></span><b>H</b><sub><i>p</i>,1</sub>, <b>H</b><sub><i>p</i>,2</sub>, . . . , <b>H</b><sub><i>p,K</i></sub><span class="rb"></span> ∈ ℂ<sup><i>M</i>×<i>KS</i></sup></span></td></tr>
 </table>
 <svg class="plot tex" width="384" height="270" viewBox="0 0 1152 810" font-size="26" fill="#333"><use href="#nearfield"/>
  <rect x="676" y="86" width="270" height="34" fill="#fff" stroke="#444" stroke-width="2"/><rect x="684" y="92" width="76" height="22" fill="#fffff8" stroke="#dcebc8" stroke-width="2"/><text x="766" y="111" font-size="22">Near-field channel</text>
  <g text-anchor="end"><text x="186" y="122">×10³</text><text x="174" y="167">-1.2</text><text x="174" y="238">-1.4</text><text x="174" y="309">-1.6</text><text x="174" y="381">-1.8</text><text x="174" y="447">-2</text><text x="174" y="520">-2.2</text><text x="172" y="545">400</text><text x="262" y="585">200</text><text x="352" y="623">0</text><text x="442" y="665">-200</text><text x="532" y="704">-400</text></g>
  <text x="574" y="707">-300</text><text x="652" y="686">-200</text><text x="738" y="666">100</text><text x="811" y="646">0</text><text x="888" y="624">100</text><text x="967" y="604">200</text><text x="1044" y="585">300</text>
  <g font-size="28"><text x="216" y="770">Active IRS element index <tspan font-style="italic">n</tspan></text><text x="628" y="738">Active IRS element index <tspan font-style="italic">n</tspan><tspan dy="12" font-size="18" font-style="italic">y</tspan></text><text transform="translate(118 508) rotate(-90)">The phase of channel (radian)</text></g></svg>
</article>
<div class="rail-right"><div></div></div>
</section>
</main>
<script src="https://cdn.jsdelivr.net/npm/bootstrap@5.3.0/dist/js/bootstrap.bundle.min.js"></script>
</body>
</html>
